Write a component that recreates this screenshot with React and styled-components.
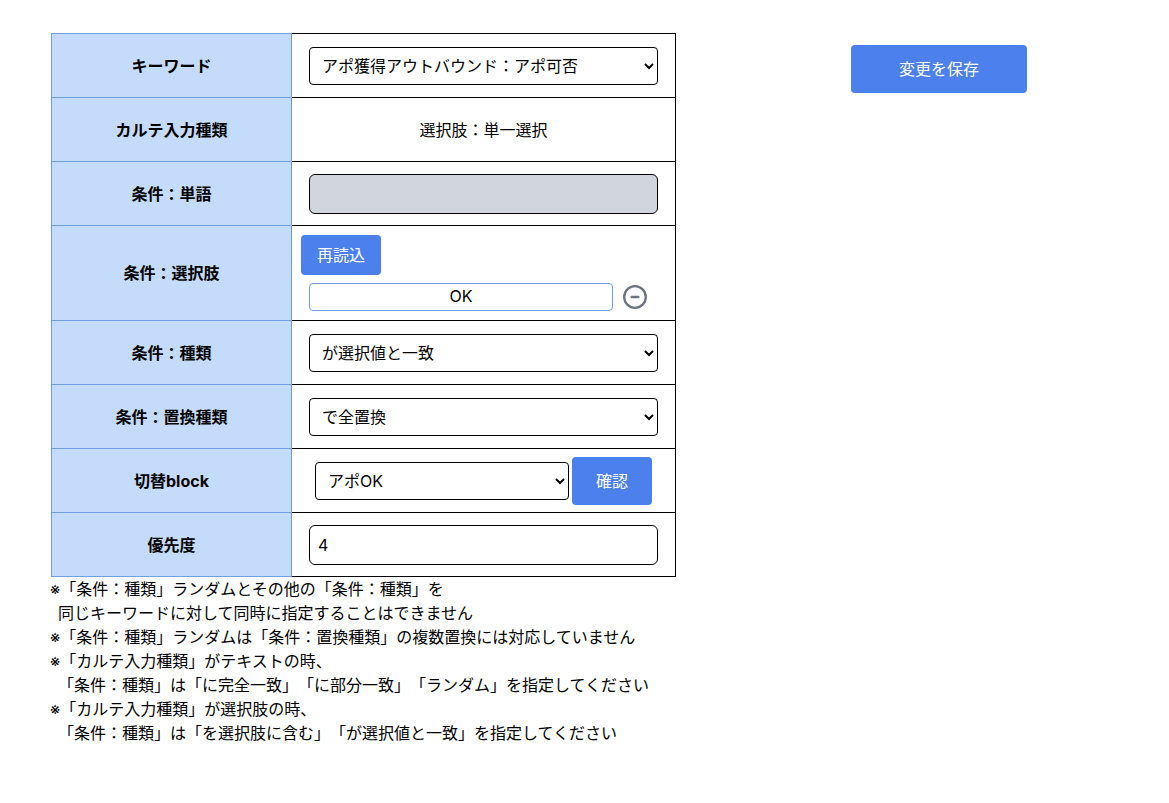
import React from "react";
import styled, { createGlobalStyle } from "styled-components";

const colors = {
  head: "#c5dbfb",
  headLine: "#6f9fe0",
  primary: "#4c80ec",
  disabled: "#d1d5dd",
  icon: "#6b7280",
};

const GlobalStyle = createGlobalStyle`
  *, *::before, *::after { box-sizing: border-box; }
  body {
    margin: 0;
    background: #fff;
    color: #000;
    font-family: Inter, "Noto Sans CJK JP", sans-serif;
    font-size: 16px;
    line-height: 24px;
    text-spacing-trim: space-all;
  }
  button, input, select { font: inherit; color: inherit; margin: 0; }
`;

const Page = styled.main`
  display: flex;
  align-items: flex-start;
  gap: 33px;
  padding: 33px 0 32px 51px;
`;

const Settings = styled.section`
  flex: none;
`;

const Actions = styled.aside`
  flex: 1;
  display: flex;
  justify-content: center;
  padding-top: 12px;
`;

const Table = styled.table`
  border-collapse: collapse;
`;

const Row = styled.tr`
  height: 64px;
`;

const Head = styled.th`
  width: 240px;
  padding: 0 8px;
  border: 1px solid ${colors.headLine};
  background: ${colors.head};
  font-weight: 700;
  text-align: center;
`;

const Cell = styled.td`
  width: 384px;
  padding: ${(p) => (p.$roomy ? "9px" : "0 9px")};
  border: 1px solid #000;
  text-align: center;
`;

const Field = styled.div`
  display: flex;
  align-items: center;
  justify-content: center;
  gap: 3px;
  padding: 0 8px;
`;

const Select = styled.select`
  width: ${(p) => p.$width || "100%"};
  height: 38px;
  padding: 0 8px;
  border: 1px solid #000;
  border-radius: 4px;
  background: #fff;
`;

const Input = styled.input`
  width: 100%;
  height: 40px;
  padding: 0 8px;
  border: 1px solid #000;
  border-radius: 6px;
  background: #fff;
  &:disabled { background: ${colors.disabled}; }
`;

const Button = styled.button`
  display: block;
  width: ${(p) => p.$width || "80px"};
  height: ${(p) => p.$height || "48px"};
  padding: 0;
  border: 0;
  border-radius: 4px;
  background: ${colors.primary};
  color: #fff;
  cursor: pointer;
`;

const Choices = styled.ul`
  margin: 8px 0 0;
  padding: 0 8px;
  list-style: none;
`;

const Choice = styled.li`
  display: flex;
  align-items: center;
  gap: 8px;
`;

const ChoiceName = styled.span`
  width: 304px;
  height: 28px;
  line-height: 24px;
  border: 1px solid ${colors.headLine};
  border-radius: 4px;
`;

const IconButton = styled.button`
  display: flex;
  width: 28px;
  height: 28px;
  padding: 0;
  border: 0;
  background: none;
  color: ${colors.icon};
  cursor: pointer;
`;

const Notes = styled.div`
  margin-left: -1px;
`;

const Note = styled.p`
  margin: 0;
  padding-left: ${(p) => (p.$indent ? "8px" : "0")};
  white-space: nowrap;
`;

const MinusCircle = () => (
  <svg width="28" height="28" viewBox="0 0 28 28" fill="none" stroke="currentColor" strokeWidth="2.3" strokeLinecap="round" aria-hidden="true">
    <circle cx="14" cy="14" r="10.8" />
    <path d="M10.8 14h6.4" strokeWidth="2.6" />
  </svg>
);

const notes = [
  { text: "※「条件：種類」ランダムとその他の「条件：種類」を" },
  { text: "同じキーワードに対して同時に指定することはできません", indent: true },
  { text: "※「条件：種類」ランダムは「条件：置換種類」の複数置換には対応していません" },
  { text: "※「カルテ入力種類」がテキストの時、" },
  { text: "「条件：種類」は「に完全一致」「に部分一致」「ランダム」を指定してください", indent: true },
  { text: "※「カルテ入力種類」が選択肢の時、" },
  { text: "「条件：種類」は「を選択肢に含む」「が選択値と一致」を指定してください", indent: true },
];

export default function App() {
  return (
    <>
      <GlobalStyle />
      <Page>
        <Settings>
          <Table>
            <tbody>
              <Row>
                <Head scope="row"><label htmlFor="keyword">キーワード</label></Head>
                <Cell>
                  <Field>
                    <Select id="keyword"><option>アポ獲得アウトバウンド：アポ可否</option></Select>
                  </Field>
                </Cell>
              </Row>
              <Row>
                <Head scope="row">カルテ入力種類</Head>
                <Cell>選択肢：単一選択</Cell>
              </Row>
              <Row>
                <Head scope="row"><label htmlFor="word">条件：単語</label></Head>
                <Cell>
                  <Field><Input id="word" type="text" disabled /></Field>
                </Cell>
              </Row>
              <Row>
                <Head scope="row">条件：選択肢</Head>
                <Cell $roomy>
                  <Button type="button" $height="40px">再読込</Button>
                  <Choices>
                    <Choice>
                      <ChoiceName>OK</ChoiceName>
                      <IconButton type="button" aria-label="OKを削除"><MinusCircle /></IconButton>
                    </Choice>
                  </Choices>
                </Cell>
              </Row>
              <Row>
                <Head scope="row"><label htmlFor="kind">条件：種類</label></Head>
                <Cell>
                  <Field>
                    <Select id="kind"><option>が選択値と一致</option></Select>
                  </Field>
                </Cell>
              </Row>
              <Row>
                <Head scope="row"><label htmlFor="replace">条件：置換種類</label></Head>
                <Cell>
                  <Field>
                    <Select id="replace"><option>で全置換</option></Select>
                  </Field>
                </Cell>
              </Row>
              <Row>
                <Head scope="row"><label htmlFor="block">切替block</label></Head>
                <Cell>
                  <Field>
                    <Select id="block" $width="254px"><option>アポOK</option></Select>
                    <Button type="button">確認</Button>
                  </Field>
                </Cell>
              </Row>
              <Row>
                <Head scope="row"><label htmlFor="priority">優先度</label></Head>
                <Cell>
                  <Field><Input id="priority" type="text" inputMode="numeric" defaultValue="4" /></Field>
                </Cell>
              </Row>
            </tbody>
          </Table>
          <Notes>
            {notes.map((n) => (
              <Note key={n.text} $indent={n.indent}>{n.text}</Note>
            ))}
          </Notes>
        </Settings>
        <Actions>
          <Button type="button" $width="176px">変更を保存</Button>
        </Actions>
      </Page>
    </>
  );
}
